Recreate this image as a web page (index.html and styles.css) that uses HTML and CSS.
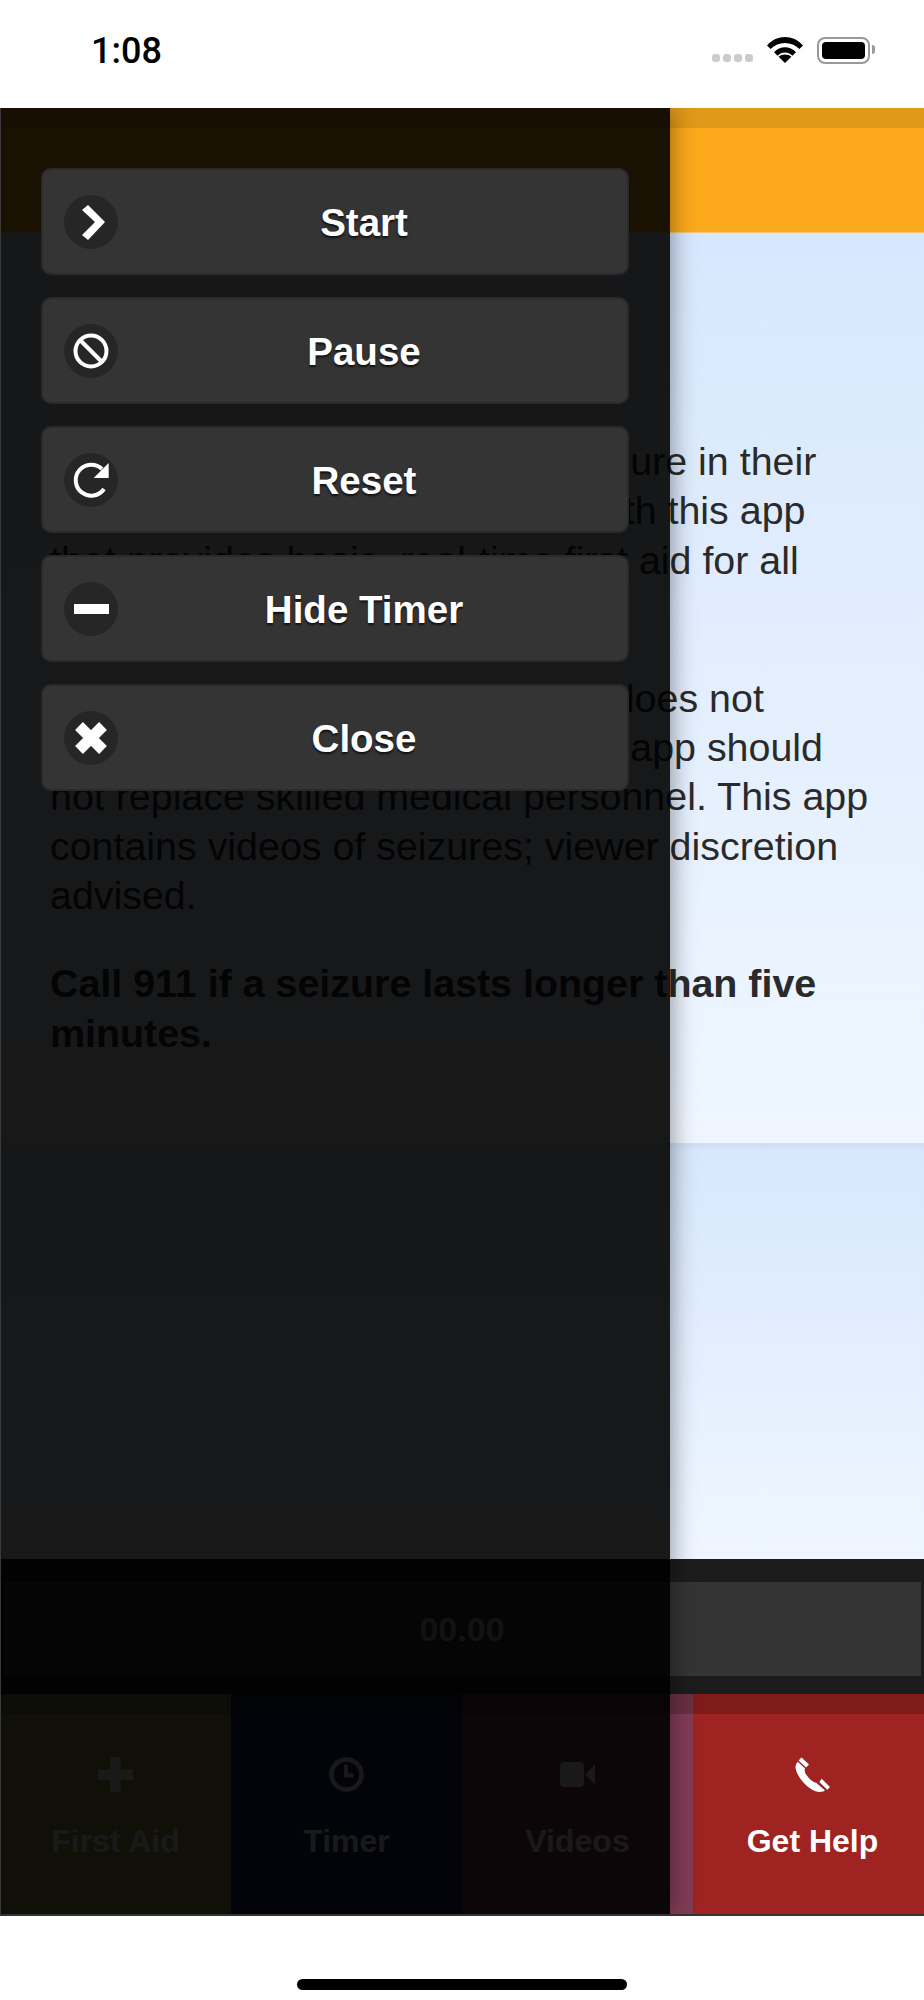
FILE: index.html
```html
<!DOCTYPE html>
<html lang="en">
<head>
    <meta charset="UTF-8">
    <meta name="viewport" content="width=device-width, initial-scale=1.0">
    <title>Seizure First Aid</title>
    <link rel="stylesheet" href="styles.css">
</head>
<body>
    <div class="status-bar">
        <span class="clock">1:08</span>
        <div class="status-icons">
            <div class="signal"><i></i><i></i><i></i><i></i></div>
            <svg class="wifi" viewBox="0 0 36 26" width="36" height="26">
                <path d="M0 8.500C10-2.800 26-2.800 36 8.500l-3.600 3.600C25 4 11 4 3.600 12.100z"/>
                <path d="M7 15.200C13 8.600 23 8.600 29 15.200l-3.600 3.500C21 14.400 15 14.400 10.600 18.700z"/>
                <path d="M18 26l-6.400-6.200C15 16.600 21 16.600 24.400 19.800z"/>
            </svg>
            <div class="battery"><div class="battery-fill"></div></div>
        </div>
    </div>

    <div class="app">
        <header class="app-header"></header>
        <main class="panels">
            <section class="panel panel-intro">
                <p>If somebody you know has a seizure in their<br>
                    presence, you would be ready with this app<br>
                    that provides basic, real-time first aid for all</p>
                <p>The Epilepsy Foundation of MN does not<br>
                    give out medical advice, and this app should<br>
                    not replace skilled medical personnel. This app<br>
                    contains videos of seizures; viewer discretion<br>
                    advised.</p>
                <p><strong>Call 911 if a seizure lasts longer than five<br>minutes.</strong></p>
            </section>
            <section class="panel panel-second"></section>
        </main>
        <div class="timer-bar">
            <div class="timer-readout">00.00</div>
        </div>
        <nav class="tabs">
            <a class="tab tab-aid">
                <svg viewBox="0 0 35 35" width="35" height="35"><path d="M12 0h10.500v12.500H35V23H22.500v12H12V23H0V12.500h12z"/></svg>
                First Aid
            </a>
            <a class="tab tab-timer">
                <svg viewBox="0 0 35 35" width="35" height="35"><circle cx="17.500" cy="17.500" r="15" fill="none" stroke="#fff" stroke-width="4.500"/><path d="M17 9.500v9h6" fill="none" stroke="#fff" stroke-width="4" stroke-linecap="round" stroke-linejoin="round"/></svg>
                Timer
            </a>
            <a class="tab tab-videos">
                <svg viewBox="0 0 35 35" width="35" height="35"><rect x="0" y="5" width="24" height="25" rx="4"/><path d="M25 17.500L35 7.500v20z"/></svg>
                Videos
            </a>
            <a class="tab tab-help">
                <svg viewBox="0 0 35 35" width="35" height="35">
                    <path d="M2.800 4.800L10 11.400C9.500 13 9.500 15 11.500 18 14 21.500 17 24.500 20 25.500L21.500 26 30 33.500C26 36 21 35 16 32 9 27.500 3 20 1 13 0 10 .5 7 2.800 4.800Z"/>
                    <path d="M3.500 3.500L6.500.5 14 7.500 11 10.500ZM24.300 25L26.700 21.700 35 30 32.300 32.700Z"/>
                </svg>
                Get Help
            </a>
        </nav>

        <aside class="drawer">
            <button class="drawer-btn">
                <span class="btn-icon"><svg viewBox="0 0 54 54" width="54" height="54"><path d="M18 15l6-5 17 17-17 18-6-5 13-13z"/></svg></span>
                Start
            </button>
            <button class="drawer-btn">
                <span class="btn-icon"><svg viewBox="0 0 54 54" width="54" height="54"><circle cx="27" cy="27" r="15.500" fill="none" stroke="#fff" stroke-width="4"/><path d="M16 16l22 22" stroke="#fff" stroke-width="4"/></svg></span>
                Pause
            </button>
            <button class="drawer-btn">
                <span class="btn-icon"><svg viewBox="0 0 54 54" width="54" height="54"><path d="M38 16A15.500 15.500 0 1 0 40 36" fill="none" stroke="#fff" stroke-width="4"/><path d="M44.700 10v15h-15z"/></svg></span>
                Reset
            </button>
            <button class="drawer-btn">
                <span class="btn-icon"><svg viewBox="0 0 54 54" width="54" height="54"><rect x="10" y="22" width="35" height="10"/></svg></span>
                Hide Timer
            </button>
            <button class="drawer-btn">
                <span class="btn-icon"><svg viewBox="0 0 54 54" width="54" height="54"><path d="M15 15l24 24M39 15L15 39" stroke="#fff" stroke-width="11"/></svg></span>
                Close
            </button>
        </aside>
    </div>

    <div class="home-area"><div class="home-bar"></div></div>
</body>
</html>
```

FILE: styles.css
```css
body {
    margin: 0;
    width: 924px;
    height: 2000px;
    overflow: hidden;
    background-color: #fff;
    font-family: "Liberation Sans", Arial, sans-serif;
    color: #2a2a2a;
}
svg {
    display: block;
    fill: #fff;
}

/* status bar */
.status-bar {
    height: 108px;
    display: flex;
    align-items: center;
    justify-content: space-between;
    padding: 0 54px 8px 91px;
    box-sizing: border-box;
}
.clock {
    font-family: Roboto, sans-serif;
    font-weight: 500;
    font-size: 36px;
    color: #000;
    padding-top: 2px;
}
.status-icons {
    display: flex;
    align-items: center;
    gap: 14px;
}
.signal {
    display: flex;
    gap: 3px;
    margin-top: 16px;
}
.signal i {
    width: 8px;
    height: 8px;
    border-radius: 3px;
    background-color: #ccc;
}
.wifi {
    fill: #000;
}
.battery {
    position: relative;
    width: 53px;
    height: 27px;
    box-sizing: border-box;
    border: 2px solid #999;
    border-radius: 8px;
    padding: 3px;
}
.battery::after {
    content: "";
    position: absolute;
    right: -7px;
    top: 6px;
    width: 3px;
    height: 9px;
    background-color: #999;
    border-radius: 0 4px 4px 0;
}
.battery-fill {
    height: 100%;
    background-color: #000;
    border-radius: 4px;
}

/* app */
.app {
    position: relative;
    height: 1808px;
    overflow: hidden;
    display: flex;
    flex-direction: column;
    border-bottom: 2px solid #333;
    box-sizing: border-box;
}
.app-header {
    height: 125px;
    flex-shrink: 0;
    box-sizing: border-box;
    background-color: #fcaa1c;
    border-top: 20px solid #e09a1a;
    border-bottom: 1px solid #f3c77a;
}
.panels {
    height: 1326px;
    flex-shrink: 0;
    display: flex;
    flex-direction: column;
}
.panel {
    box-sizing: border-box;
    background: linear-gradient(#d7e7fd, #eff6ff);
}
.panel-intro {
    height: 912px;
    padding: 204px 50px 0;
    font-size: 39.400px;
    line-height: 49.300px;
    border-bottom: 2px solid #d5e0ef;
}
.panel-intro p {
    margin: 0 0 39px;
}
.panel-intro p:first-child {
    margin-bottom: 89px;
}
.panel-second {
    flex-grow: 1;
    box-shadow: inset 0 5px 5px -3px rgba(0, 0, 0, 0.05);
}

.timer-bar {
    height: 135px;
    flex-shrink: 0;
    box-sizing: border-box;
    background-color: #1c1c1c;
    padding: 23px 3px 18px;
}
.timer-readout {
    height: 100%;
    background-color: #343434;
    display: flex;
    align-items: center;
    justify-content: center;
    font-size: 34px;
    font-weight: bold;
    color: #b5b5b5;
}

.tabs {
    flex-grow: 1;
    display: grid;
    grid-template-columns: repeat(4, 1fr);
}
.tab {
    box-sizing: border-box;
    border-top: 20px solid rgba(0, 0, 0, 0.2);
    padding-top: 43px;
    display: flex;
    flex-direction: column;
    align-items: center;
    gap: 31px;
    font-size: 32px;
    font-weight: bold;
    color: #fff;
}
.tab-aid { background-color: #a0a062; }
.tab-timer { background-color: #143060; }
.tab-videos { background-color: #823c55; }
.tab-help {
    background-color: #9e2321;
    padding-left: 8px;
}

/* drawer over the page */
.drawer {
    position: absolute;
    left: 0;
    top: 0;
    bottom: 0;
    width: 670px;
    box-sizing: border-box;
    padding: 60px 41px 0 40px;
    background-color: rgba(0, 0, 0, 0.9);
    border-left: 1px solid #3a3a3a;
    box-shadow: 0 0 24px rgba(0, 0, 0, 0.45);
    display: flex;
    flex-direction: column;
    gap: 22px;
}
.drawer-btn {
    position: relative;
    height: 107px;
    flex-shrink: 0;
    background-color: #343434;
    border: 2px solid #2a2a2a;
    border-radius: 10px;
    color: #fff;
    font-family: inherit;
    font-size: 38.500px;
    font-weight: bold;
    text-shadow: 0 2px 2px #111;
    padding: 2px 0 0 58px;
}
.btn-icon {
    position: absolute;
    left: 21px;
    top: 25px;
    width: 54px;
    height: 54px;
    border-radius: 50%;
    background-color: #262626;
}

.home-area {
    height: 84px;
    display: flex;
    justify-content: center;
    padding-top: 63px;
    box-sizing: border-box;
}
.home-bar {
    width: 330px;
    height: 11px;
    border-radius: 6px;
    background-color: #000;
}
```
